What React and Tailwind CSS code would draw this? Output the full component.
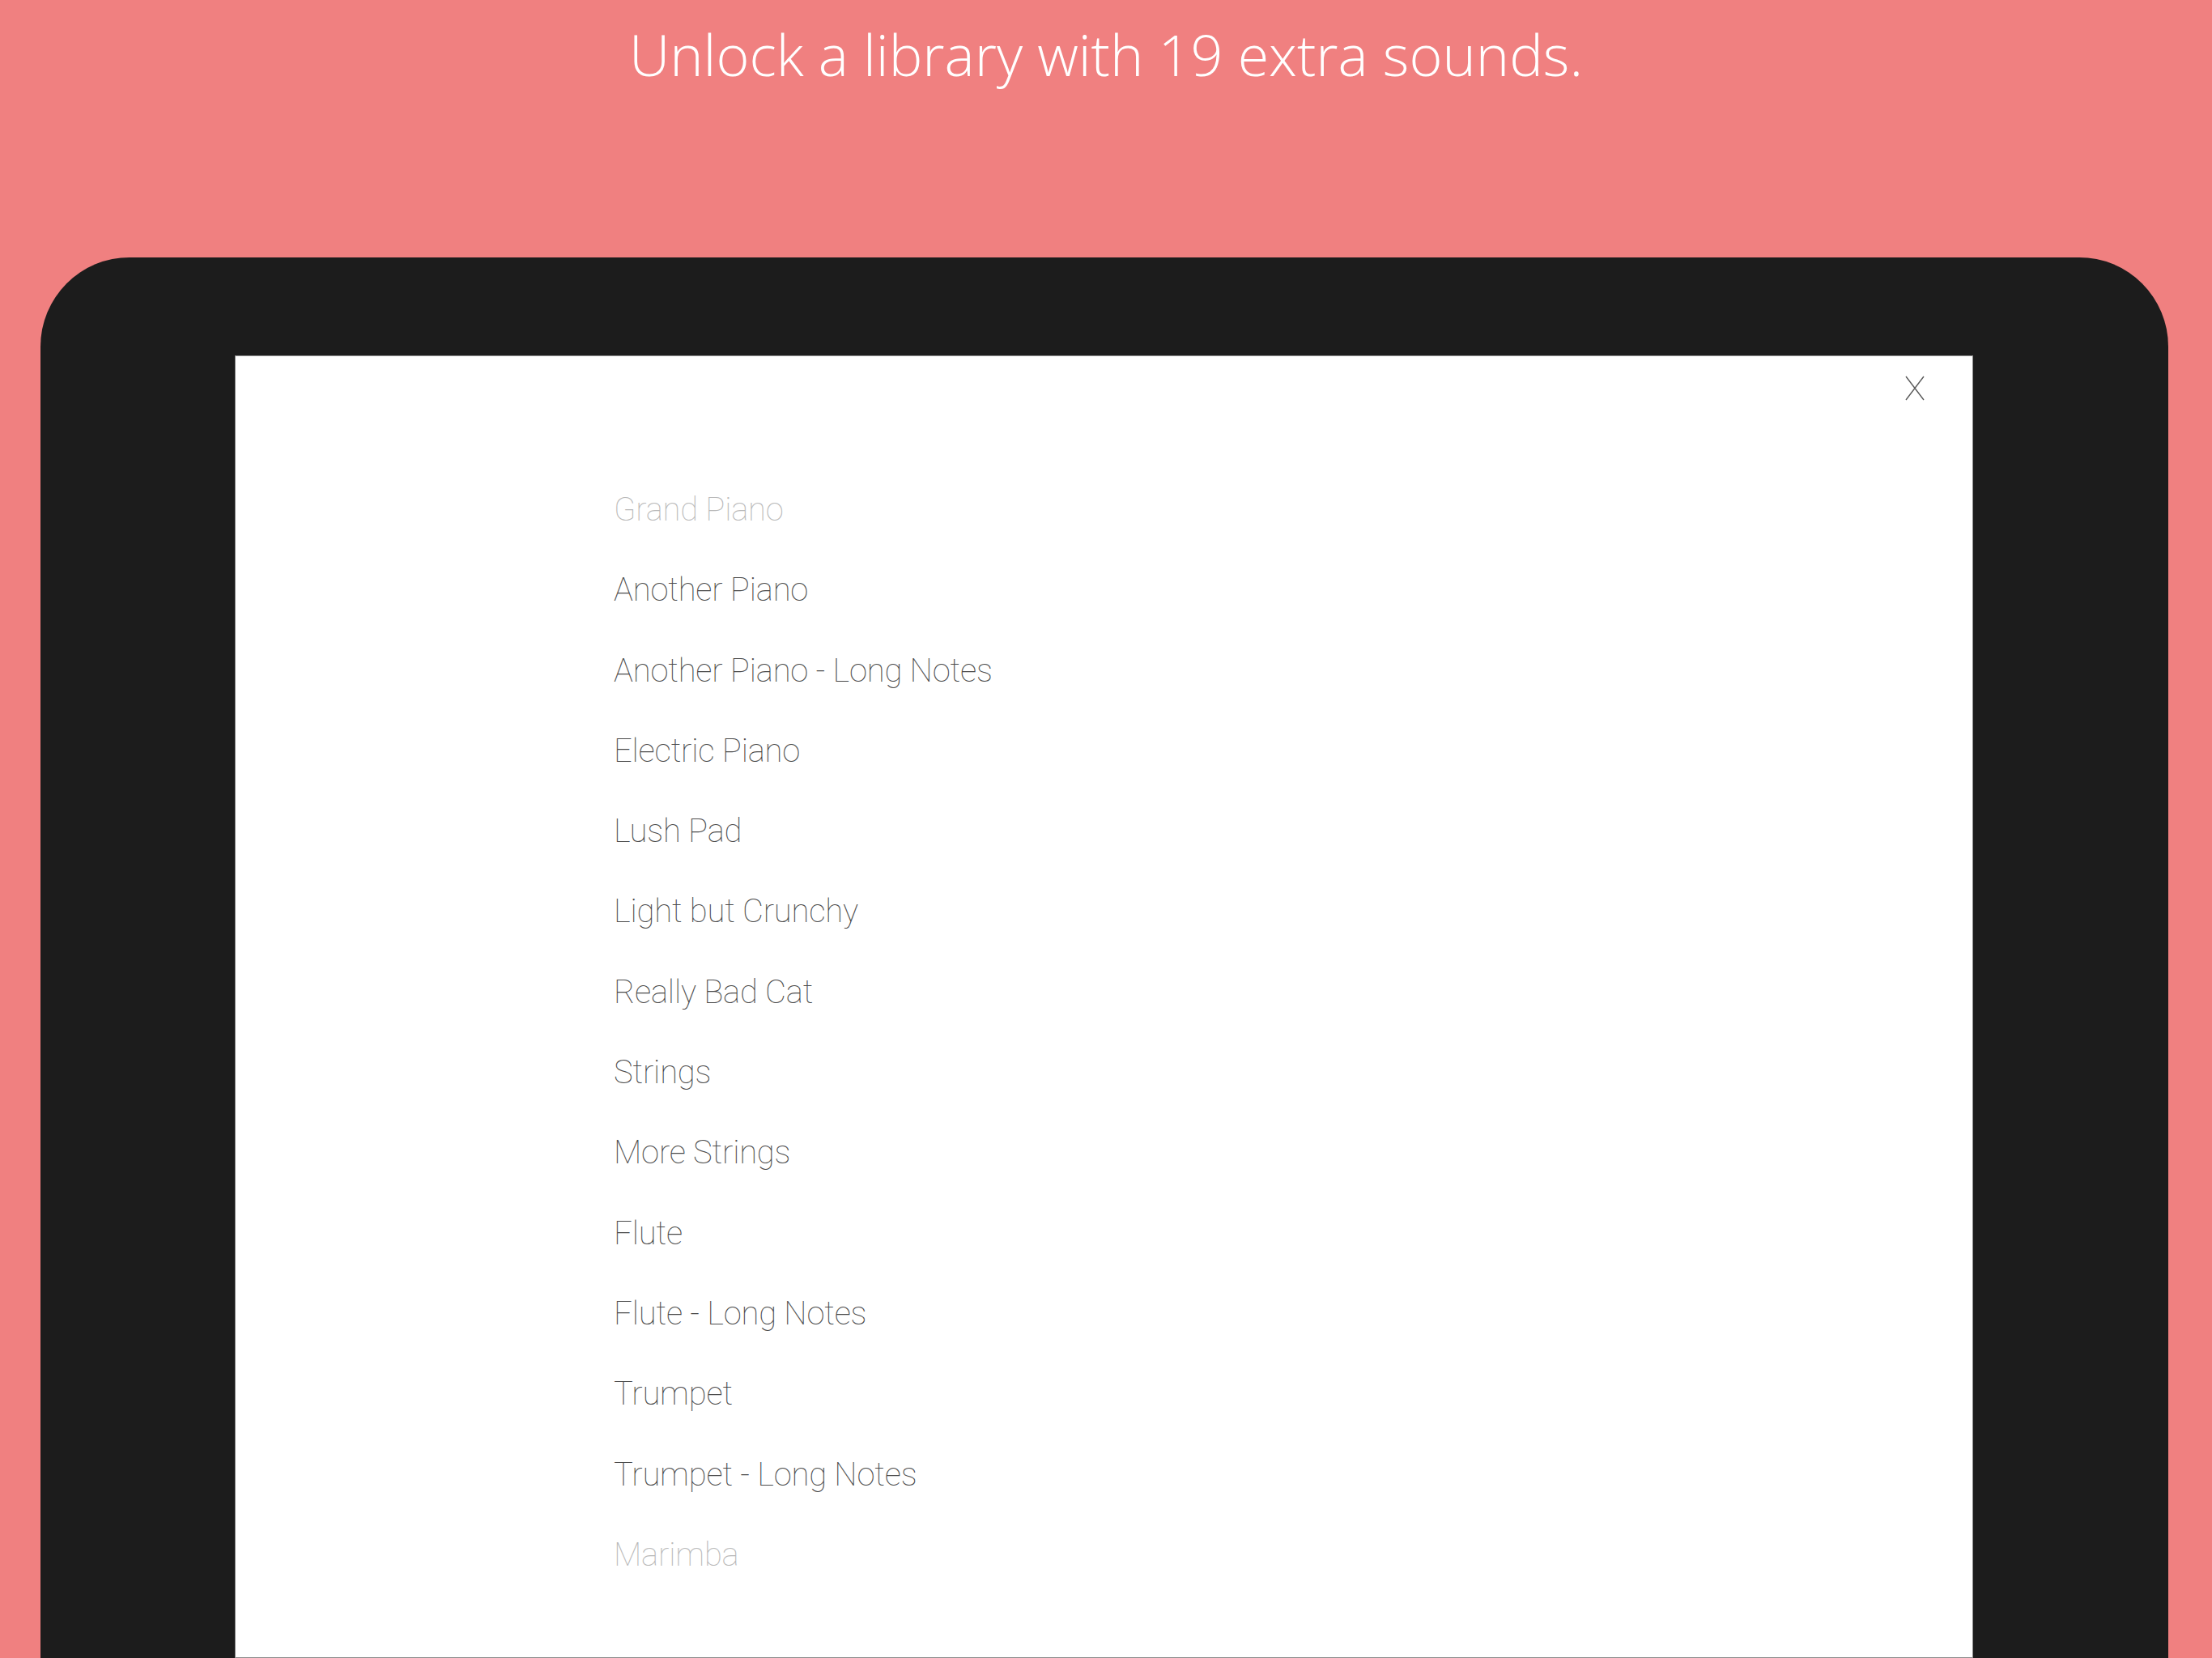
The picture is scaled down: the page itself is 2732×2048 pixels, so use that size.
const sounds = [
  { name: "Grand Piano", dim: true },
  { name: "Another Piano" },
  { name: "Another Piano - Long Notes" },
  { name: "Electric Piano" },
  { name: "Lush Pad" },
  { name: "Light but Crunchy" },
  { name: "Really Bad Cat" },
  { name: "Strings" },
  { name: "More Strings" },
  { name: "Flute" },
  { name: "Flute - Long Notes" },
  { name: "Trumpet" },
  { name: "Trumpet - Long Notes" },
  { name: "Marimba", dim: true }
]

function CloseIcon() {
  return (
    <svg width="24" height="31" viewBox="0 0 24 31" fill="none">
      <path d="M1 1 L23 30 M23 1 L1 30" stroke="#5a5a5a" strokeWidth="1.4" />
    </svg>
  )
}

export default function App() {
  return (
    <div className="w-[2732px] h-[2048px] bg-[#f08080] overflow-hidden flex flex-col">
      {/* headline */}
      <div className="h-[318px] shrink-0 flex justify-center pt-[32px]">
        <h1 className="font-['Open_Sans',sans-serif] font-light text-[70px] leading-[70px] text-white">
          Unlock a library with 19 extra sounds.
        </h1>
      </div>

      {/* tablet frame */}
      <div className="ml-[50px] w-[2628px] flex-1 bg-[#1c1c1c] rounded-t-[110px] pt-[121px] pl-[240px]">
        <div className="w-[2147px] h-[1609px] bg-white border border-[#8c8c8c] flex flex-col">
          <div className="flex justify-end pt-[24px] pr-[59px]">
            <CloseIcon />
          </div>

          <ul className="pl-[467px] pt-[85px] font-['Roboto',sans-serif] font-thin text-[40px] leading-[99.3px] tracking-[-0.2px]">
            {sounds.map((s) => (
              <li key={s.name} className={s.dim ? "text-[#b8b8b8]" : "text-[#4a4a4a]"}>
                {s.name}
              </li>
            ))}
          </ul>
        </div>
      </div>
    </div>
  )
}
